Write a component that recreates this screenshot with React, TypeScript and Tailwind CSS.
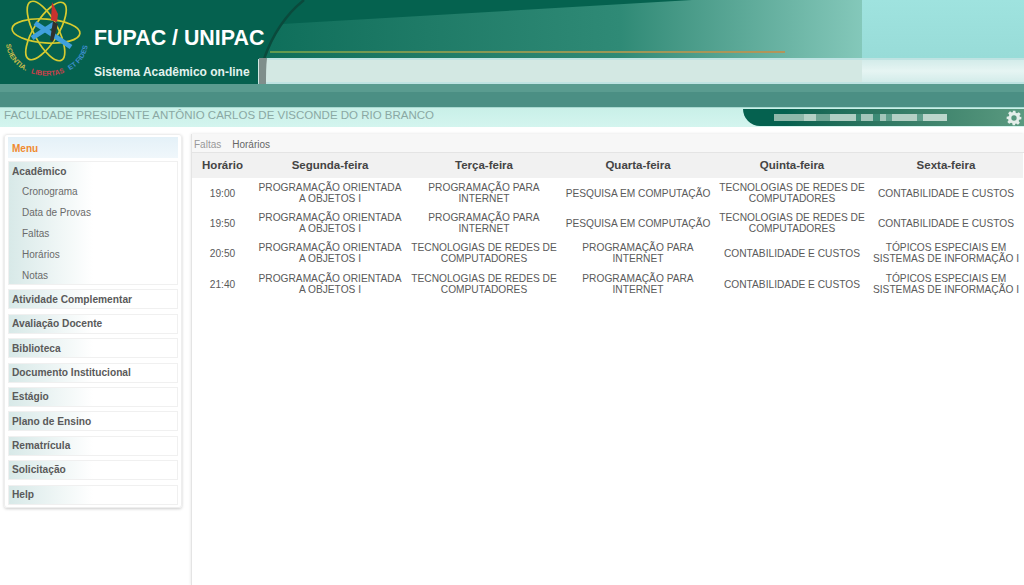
import React from "react";

const groups = ["Atividade Complementar", "Avaliação Docente", "Biblioteca", "Documento Institucional", "Estágio", "Plano de Ensino", "Rematrícula", "Solicitação", "Help"];
const subs = ["Cronograma", "Data de Provas", "Faltas", "Horários", "Notas"];
const POO = "PROGRAMAÇÃO ORIENTADA A OBJETOS I";
const PI = "PROGRAMAÇÃO PARA INTERNET";
const TR = "TECNOLOGIAS DE REDES DE COMPUTADORES";
const PC = "PESQUISA EM COMPUTAÇÃO";
const CC = "CONTABILIDADE E CUSTOS";
const TE = "TÓPICOS ESPECIAIS EM SISTEMAS DE INFORMAÇÃO I";
const rows = [
  ["19:00", POO, PI, PC, TR, CC],
  ["19:50", POO, PI, PC, TR, CC],
  ["20:50", POO, TR, PI, CC, TE],
  ["21:40", POO, TR, PI, CC, TE],
];
const heads = ["Horário", "Segunda-feira", "Terça-feira", "Quarta-feira", "Quinta-feira", "Sexta-feira"];
const blur = [
  { w: 30, c: "bg-[#8fb8aa]" },
  { w: 12, c: "bg-[#b4d0c5]" },
  { w: 14, c: "bg-[#6fa594]" },
  { w: 26, c: "bg-[#b0cec3]" },
  { w: 5, c: "bg-[#3d8a75]" },
  { w: 12, c: "bg-[#a3c6ba]" },
  { w: 7, c: "bg-[#3d8a75]" },
  { w: 6, c: "bg-[#a3c6ba]" },
  { w: 6, c: "bg-[#5f9f8c]" },
  { w: 25, c: "bg-[#b4d0c5]" },
  { w: 6, c: "bg-[#5f9f8c]" },
  { w: 24, c: "bg-[#bcd6cc]" },
];

function Logo() {
  return (
    <svg className="absolute left-0 top-0" width="92" height="84" viewBox="0 0 92 84">
      <defs>
        <path id="logo-arc" d="M6 42 A40 33 0 0 0 88 42" />
      </defs>
      <g fill="none" stroke="#d6cb30" strokeWidth="1.7">
        <ellipse cx="46" cy="31" rx="34" ry="12" transform="rotate(4 46 31)" />
        <ellipse cx="46" cy="31" rx="33" ry="12" transform="rotate(62 46 31)" />
        <ellipse cx="46" cy="31" rx="33" ry="12" transform="rotate(-58 46 31)" />
      </g>
      <path d="M35 23 L71 47" stroke="#3fa0dc" strokeWidth="5" />
      <path d="M32 38 L54 24" stroke="#3fa0dc" strokeWidth="5" />
      <path d="M52 2 L58 14 L57 22 L51 20 Z" fill="#c8322e" />
      <path d="M53 21 L58 24 L53 42 L50 40 Z" fill="#30302c" />
      <text fontFamily="'Liberation Sans', Arial, sans-serif" fontSize="7" fontWeight="700">
        <textPath href="#logo-arc" startOffset="2%" fill="#c9bd4a">SCIENTIA.</textPath>
        <textPath href="#logo-arc" startOffset="36%" fill="#d0404a">LIBERTAS</textPath>
        <textPath href="#logo-arc" startOffset="70%" fill="#3f8fd0">ET FIDES</textPath>
      </text>
    </svg>
  );
}

function Curve() {
  return (
    <svg className="absolute left-[258px] top-0" width="440" height="84" viewBox="0 0 440 84">
      <path d="M0 0 H46 C26 16 14 36 6 59 L0 59 Z" fill="#05614f" />
      <path d="M46 0 H434 L23.5 24 Z" fill="#05624f" />
      <path d="M46 0 C26 16 14 36 6 59" fill="none" stroke="#0a4a3c" strokeWidth="2.5" />
      <path d="M1 58 H9 C8 66 8 75 8 84 H1 Z" fill="#7f8e8b" />
    </svg>
  );
}

export default function App() {
  return (
    <div className="min-h-[585px] bg-white font-['Liberation_Sans',Arial,sans-serif] text-[12px] text-[#5a5a5a]">
      <header className="relative">
        <div className="flex h-[84px]">
          <div className="relative z-10 flex w-[258px] shrink-0 flex-col pl-[94px] text-white">
            <div className="mt-[25px] whitespace-nowrap text-[21.4px] font-bold leading-[26px]">FUPAC / UNIPAC</div>
            <div className="mt-[14px] whitespace-nowrap text-[12px] font-bold leading-[14px] text-[#e3f2ee]">Sistema Acadêmico on-line</div>
          </div>
          <div className="flex min-w-0 flex-1 flex-col">
            <div className="flex h-[58px]">
              <div className="relative flex-1 bg-gradient-to-r from-[#0d6e5a] via-[#2f8a76] via-60% to-[#84c8ba]">
                <div className="absolute left-[12px] top-[51px] h-[2px] w-[515px] bg-gradient-to-r from-[#5f9a50] to-[#b3955a]" />
              </div>
              <div className="w-[162px] bg-gradient-to-b from-[#9fe3df] to-[#98dcd8]" />
            </div>
            <div className="flex h-[26px]">
              <div className="flex-1 border-y-2 border-[#bfe3e2] bg-[#d3e8e3]" />
              <div className="w-[162px] border-y-2 border-[#bfe3e2] bg-gradient-to-b from-[#d3ecea] via-[#e6f5f3] to-[#d3ecea]" />
            </div>
          </div>
        </div>
        <div className="flex h-[24px] flex-col border-b border-[#a8d8d0]">
          <div className="h-[8px] bg-[#5a9c90]" />
          <div className="flex-1 bg-[#4b8f84]" />
        </div>
        <div className="flex h-[19px] items-center bg-gradient-to-b from-[#c9f0e8] to-[#d4f5ef]">
          <div className="flex-1 whitespace-nowrap pb-[5px] pl-[4px] text-[11.5px] leading-[14px] text-[#8aa8a3]">FACULDADE PRESIDENTE ANTÔNIO CARLOS DE VISCONDE DO RIO BRANCO</div>
          <div className="flex h-[17px] w-[281px] items-center rounded-bl-[40px] bg-gradient-to-r from-[#05614f] from-15% to-[#5a9a80] pl-[31px] pr-[2px]">
            <div className="flex h-[7px] flex-1">
              {blur.map((b, i) => <div key={i} className={b.c} style={{ width: b.w }} />)}
            </div>
            <svg width="16" height="16" viewBox="0 0 24 24" fill="#e4eeea">
              <path d="M10 1h4l.6 3.2 1.9.8 2.7-1.8 2.8 2.8-1.8 2.7.8 1.9L23 10v4l-3.2.6-.8 1.9 1.8 2.7-2.8 2.8-2.7-1.8-1.9.8L14 23h-4l-.6-3.2-1.9-.8-2.7 1.8-2.8-2.8 1.8-2.7-.8-1.9L1 14v-4l3.2-.6.8-1.9L3.2 4.8 6 2l2.7 1.8 1.9-.8zM12 8a4 4 0 1 0 0 8 4 4 0 0 0 0-8z" fillRule="evenodd" />
            </svg>
          </div>
        </div>
        <div className="absolute left-0 top-0 h-[84px] w-[258px] bg-[#05614f]" />
        <Curve />
        <Logo />
      </header>

      <div className="flex gap-[9px] pl-[4px] pt-[7px]">
        <aside className="h-[374px] w-[178px] shrink-0 rounded-[3px] border border-[#eeeeee] px-[3px] py-[2px] shadow-[0_1px_3px_rgba(0,0,0,0.2)]">
          <div className="flex h-[21px] items-center bg-gradient-to-b from-[#e4f1f8] to-[#f0f7fb] pl-[4px] pt-[1px] text-[10px] font-bold text-[#f08a30]">Menu</div>
          <div className="mt-[3px] h-[124px] border border-[#f0f0f0] bg-gradient-to-r from-[#d8e9e8] to-white to-50%">
            <div className="flex h-[19px] items-center pl-[3px] text-[10.2px] font-bold">Acadêmico</div>
            {subs.map((s) => (
              <div key={s} className="flex h-[21px] items-center pl-[13px] text-[10px] text-[#6a6a6a]">{s}</div>
            ))}
          </div>
          {groups.map((g) => (
            <div key={g} className="mt-[4.4px] flex h-[20px] items-center border border-[#f0f0f0] bg-gradient-to-r from-[#d8e9e8] to-white to-50% pl-[3px] text-[10.2px] font-bold">{g}</div>
          ))}
        </aside>
        <main className="flex min-h-[451px] min-w-0 flex-1 flex-col border-l border-[#e4e4e4] shadow-[0_0_3px_rgba(0,0,0,0.12)]">
          <div className="flex h-[19px] items-center gap-[11px] border-b border-[#e4e4e4] bg-[#f7f7f7] pl-[2px] pt-[2px] text-[10px]">
            <span className="text-[#999999]">Faltas</span>
            <span className="text-[#666666]">Horários</span>
          </div>
          <table className="w-[831px] table-fixed border-collapse text-center">
            <colgroup>
              <col className="w-[61px]" />
              <col /><col /><col /><col /><col />
            </colgroup>
            <thead>
              <tr className="h-[25px] bg-[#f1f1f1] text-[11.5px] font-bold text-[#444444]">
                {heads.map((h) => <th key={h} className="p-0 font-bold">{h}</th>)}
              </tr>
            </thead>
            <tbody>
              {rows.map((r, n) => (
                <tr key={r[0]} className={n === 3 ? "h-[32px] text-[10.2px] leading-[11px]" : "h-[30px] text-[10.2px] leading-[11px]"}>
                  {r.map((c, i) => <td key={i} className="px-[3px] py-0">{c}</td>)}
                </tr>
              ))}
            </tbody>
          </table>
        </main>
      </div>
    </div>
  );
}
